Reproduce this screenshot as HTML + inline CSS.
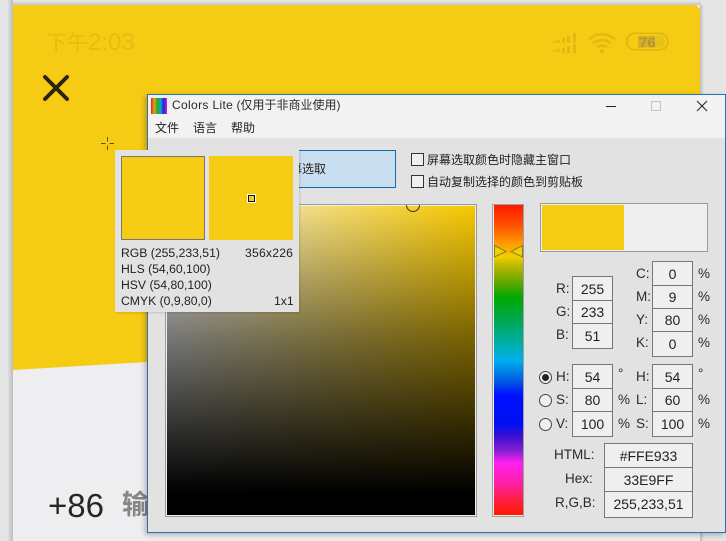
<!DOCTYPE html>
<html><head><meta charset="utf-8">
<style>
html,body{margin:0;padding:0}
body{width:726px;height:541px;position:relative;overflow:hidden;background:#e6e5e5;font-family:"Liberation Sans","Noto Sans CJK SC",sans-serif;color:#222}
div,svg{position:absolute}
.t{white-space:nowrap;font-size:13.5px;line-height:18px;height:18px;color:#2a2a2a}
.c{font-size:12px;line-height:16px;height:16px;white-space:nowrap;color:#222}
.p{font-size:12.2px;line-height:16px;height:16px;white-space:nowrap;color:#222}
.b{background:#efefef;border:1px solid #777;box-sizing:border-box;text-align:center;font-size:14px;color:#222;white-space:nowrap}
.cb{width:13px;height:13px;border:1px solid #333;background:#efefef;box-sizing:border-box}
.r{width:13px;height:13px;border:1px solid #444;border-radius:50%;background:#efefef;box-sizing:border-box}
</style></head><body>

<!-- phone -->
<div style="left:7px;top:0;width:6px;height:541px;background:linear-gradient(90deg,#e6e5e5,#bcbcbc)"></div>
<div style="left:13px;top:1px;width:688px;height:4px;background:linear-gradient(180deg,#e6e5e5,#c4c4c4)"></div>
<div style="left:700px;top:5px;width:4px;height:536px;background:linear-gradient(90deg,#bcbcbc,#e6e5e5)"></div>
<div style="left:13px;top:5px;width:687px;height:536px;background:#eeeef0;overflow:hidden">
  <svg width="687" height="536" style="left:0;top:0"><polygon points="0,0 683,0 687,4 687,324 0,365" fill="#f5cb14"/></svg>
</div>
<div class="t" style="left:46px;top:29px;height:28px;line-height:28px;font-size:21px;color:#e5bd12">下午<span style="font-size:24px">2:03</span></div>

<svg style="left:40px;top:72px" width="34" height="32"><path d="M5 5L27 27M27 5L5 27" stroke="#2b250e" stroke-width="4" stroke-linecap="round"/></svg>

<!-- status icons -->
<svg style="left:550px;top:30px" width="125" height="26" fill="#e2ba12">
  <g>
    <rect x="3" y="11" width="3" height="2"/><rect x="7" y="10" width="3" height="3"/><rect x="12" y="8" width="3" height="5"/><rect x="17" y="6" width="3" height="7"/><rect x="23" y="3" width="3" height="10"/>
    <rect x="3" y="20" width="3" height="2"/><rect x="7" y="19" width="3" height="3"/><rect x="12" y="18" width="3" height="5"/><rect x="17" y="16" width="3" height="7"/><rect x="23" y="14" width="3" height="9"/>
  </g>
  <g fill="none" stroke="#e2ba12" stroke-width="2.4">
    <path d="M39 9.5C46 2.500 58 2.500 65 9.500"/>
    <path d="M43 13.500C48 9 56 9 61 13.500"/>
    <path d="M47 17.500C50 15 54 15 57 17.500"/>
  </g>
  <circle cx="52" cy="21" r="2.300"/>
  <rect x="76.800" y="3.300" width="41" height="16.500" rx="8" fill="none" stroke="#ddb612" stroke-width="1.600"/>
  <path d="M88 6H105V17.500H88Z" fill="#d6b020"/>
  <path d="M105 6H111C116 6 116 17.500 111 17.500H105Z" fill="#e6c21a"/>
  <text x="89" y="17.500" font-size="15" font-weight="bold" fill="#b09838" font-family="Liberation Sans">76</text>
</svg>

<!-- crosshair -->
<svg style="left:100px;top:136px" width="15" height="15"><path d="M7.500 1V5.500M7.500 9.500V14M1 7.500H5.500M9.500 7.500H14" stroke="#5a5520" stroke-width="1"/></svg>

<!-- +86 -->
<div class="t" style="left:48px;top:486px;height:40px;line-height:40px;font-size:33px;color:#262626">+86</div>
<div class="t" style="left:122px;top:488px;height:34px;line-height:34px;font-size:27px;font-weight:bold;color:#868686">输</div>

<!-- window -->
<div style="left:147px;top:94px;width:579px;height:439px;box-sizing:border-box;border:1px solid #2a72b5;background:#e2e2e2;box-shadow:-2px 2px 5px rgba(0,0,0,.25)"></div>
<div style="left:148px;top:95px;width:577px;height:43px;background:#f2f2f3"></div>

<svg style="left:151px;top:98px" width="16" height="16">
  <defs><linearGradient id="rb"><stop offset="0" stop-color="#e82020"/><stop offset=".2" stop-color="#e8a010"/><stop offset=".4" stop-color="#20b020"/><stop offset=".6" stop-color="#10a0d0"/><stop offset=".8" stop-color="#2020e0"/><stop offset="1" stop-color="#e020c0"/></linearGradient></defs>
  <rect width="16" height="16" fill="url(#rb)"/>
</svg>
<div class="c" style="left:172px;top:97px;color:#2a2a2a"><span style="letter-spacing:.35px">Colors Lite</span> (仅用于非商业使用)</div>
<div class="c" style="left:155px;top:120px">文件</div>
<div class="c" style="left:193px;top:120px">语言</div>
<div class="c" style="left:231px;top:120px">帮助</div>

<svg style="left:600px;top:95px" width="125" height="22" fill="none">
  <path d="M6 11.500H16" stroke="#222" stroke-width="1"/>
  <rect x="51.500" y="6.500" width="9" height="9" stroke="#c4c4c4"/>
  <path d="M97 6L107 16M107 6L97 16" stroke="#222" stroke-width="1"/>
</svg>

<!-- button -->
<div style="left:240px;top:150px;width:156px;height:38px;box-sizing:border-box;background:#c9deef;border:1px solid #0f6cb0"></div>
<div class="c" style="left:278px;top:161px;color:#222">屏幕选取</div>

<div class="cb" style="left:411px;top:153px"></div>
<div class="c" style="left:427px;top:152px">屏幕选取颜色时隐藏主窗口</div>
<div class="cb" style="left:411px;top:175px"></div>
<div class="c" style="left:427px;top:174px">自动复制选择的颜色到剪贴板</div>

<!-- colour field -->
<div style="left:165px;top:204px;width:312px;height:313px;box-sizing:border-box;border:1px solid #9a9a9a;box-shadow:inset 0 0 0 1px #eee"></div>
<div style="left:167px;top:206px;width:308px;height:309px;background:linear-gradient(180deg,rgba(0,0,0,0) 0%,rgba(0,0,0,.5) 42%,rgba(0,0,0,.8) 72%,#000 93%),linear-gradient(90deg,#f0f0f0,#f6c800)"></div>
<svg style="left:405px;top:203px" width="16" height="10" fill="none"><path d="M1.500 2A6 6 0 0 0 14.500 2" stroke="#333" stroke-width="1"/></svg>

<!-- spectrum -->
<div style="left:492px;top:204px;width:32px;height:313px;box-sizing:border-box;border:1px solid #a0a0a0;background:#eee"></div>
<div style="left:494px;top:205px;width:29px;height:310px;background:linear-gradient(180deg,#ff1800 0,#ff5000 20px,#ff9000 36px,#f0d000 52px,#c0b800 60px,#60a800 78px,#00a800 92px,#00a850 115px,#00b0c0 145px,#00b0f0 155px,#0060e0 175px,#0010ff 190px,#0010f0 220px,#4010d0 232px,#8020d0 245px,#ff20f0 258px,#ff20a0 280px,#ff2040 295px,#ff1800 310px)"></div>
<svg style="left:492px;top:243px" width="32" height="16" fill="#f0d000" stroke="#8a7a30" stroke-width="1"><path d="M2.500 2.500L14 8.500L2.500 14ZM30.500 2.500L19 8.500L30.500 14Z"/></svg>

<!-- preview -->
<div style="left:540px;top:203px;width:168px;height:49px;box-sizing:border-box;border:1px solid #9a9a9a;background:#f0eff0"></div>
<div style="left:542px;top:205px;width:82px;height:45px;background:#f5cb14"></div>

<!-- RGB -->
<div class="t" style="left:556px;top:280px">R:</div>
<div class="t" style="left:556px;top:303px">G:</div>
<div class="t" style="left:556px;top:326px">B:</div>
<div class="b" style="left:572px;top:276px;width:41px;height:25px;line-height:24px">255</div>
<div class="b" style="left:572px;top:300px;width:41px;height:24px;line-height:23px">233</div>
<div class="b" style="left:572px;top:323px;width:41px;height:26px;line-height:24px">51</div>

<!-- CMYK -->
<div class="t" style="left:636px;top:265px">C:</div>
<div class="t" style="left:636px;top:288px">M:</div>
<div class="t" style="left:636px;top:311px">Y:</div>
<div class="t" style="left:636px;top:334px">K:</div>
<div class="b" style="left:652px;top:261px;width:41px;height:25px;line-height:24px">0</div>
<div class="b" style="left:652px;top:285px;width:41px;height:24px;line-height:23px">9</div>
<div class="b" style="left:652px;top:308px;width:41px;height:24px;line-height:23px">80</div>
<div class="b" style="left:652px;top:331px;width:41px;height:26px;line-height:24px">0</div>
<div class="t" style="left:698px;top:265px">%</div>
<div class="t" style="left:698px;top:288px">%</div>
<div class="t" style="left:698px;top:311px">%</div>
<div class="t" style="left:698px;top:334px">%</div>

<!-- HSV -->
<div class="r" style="left:539px;top:371px"></div>
<div style="left:542px;top:374px;width:7px;height:7px;border-radius:50%;background:#222"></div>
<div class="r" style="left:539px;top:394px"></div>
<div class="r" style="left:539px;top:418px"></div>
<div class="t" style="left:556px;top:368px">H:</div>
<div class="t" style="left:556px;top:391px">S:</div>
<div class="t" style="left:556px;top:415px">V:</div>
<div class="b" style="left:572px;top:364px;width:41px;height:25px;line-height:24px">54</div>
<div class="b" style="left:572px;top:388px;width:41px;height:24px;line-height:23px">80</div>
<div class="b" style="left:572px;top:411px;width:41px;height:26px;line-height:24px">100</div>
<div class="t" style="left:618px;top:365px">°</div>
<div class="t" style="left:618px;top:391px">%</div>
<div class="t" style="left:618px;top:415px">%</div>

<!-- HLS -->
<div class="t" style="left:636px;top:368px">H:</div>
<div class="t" style="left:636px;top:391px">L:</div>
<div class="t" style="left:636px;top:415px">S:</div>
<div class="b" style="left:652px;top:364px;width:41px;height:25px;line-height:24px">54</div>
<div class="b" style="left:652px;top:388px;width:41px;height:24px;line-height:23px">60</div>
<div class="b" style="left:652px;top:411px;width:41px;height:26px;line-height:24px">100</div>
<div class="t" style="left:698px;top:365px">°</div>
<div class="t" style="left:698px;top:391px">%</div>
<div class="t" style="left:698px;top:415px">%</div>

<!-- codes -->
<div class="t" style="left:554px;top:446px">HTML:</div>
<div class="t" style="left:565px;top:470px">Hex:</div>
<div class="t" style="left:555px;top:494px">R,G,B:</div>
<div class="b" style="left:604px;top:443px;width:89px;height:25px;line-height:24px">#FFE933</div>
<div class="b" style="left:604px;top:467px;width:89px;height:25px;line-height:24px">33E9FF</div>
<div class="b" style="left:604px;top:491px;width:89px;height:27px;line-height:25px">255,233,51</div>

<!-- popup -->
<div style="left:115px;top:150px;width:184px;height:162px;background:#e2e2e3;box-shadow:1px 1px 2px rgba(0,0,0,.15)"></div>
<div style="left:121px;top:156px;width:84px;height:84px;box-sizing:border-box;border:1px solid #777;background:#f5cb14"></div>
<div style="left:209px;top:156px;width:84px;height:84px;background:#f5cb14"></div>
<div style="left:248px;top:195px;width:7px;height:7px;box-sizing:border-box;border:1px solid #111;outline:1px solid #fff;background:#f5cb14"></div>
<div class="p" style="left:121px;top:245px">RGB (255,233,51)</div>
<div class="p" style="left:245px;top:245px;letter-spacing:.2px">356x226</div>
<div class="p" style="left:121px;top:261px">HLS (54,60,100)</div>
<div class="p" style="left:121px;top:277px">HSV (54,80,100)</div>
<div class="p" style="left:121px;top:293px">CMYK (0,9,80,0)</div>
<div class="p" style="left:274px;top:293px">1x1</div>

</body></html>
